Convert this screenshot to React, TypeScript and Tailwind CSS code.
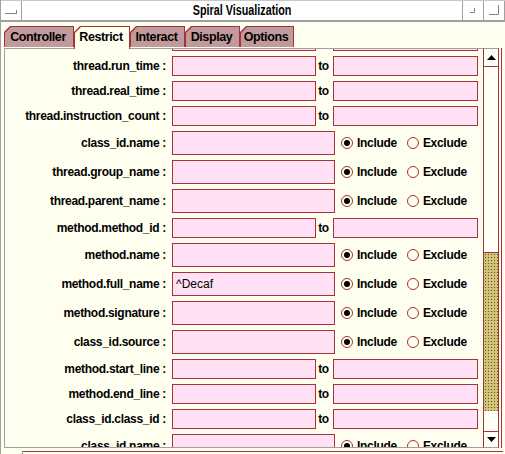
import React from "react";

type Row = {
  label: string;
  kind: "range" | "match";
  value?: string;
};

// the list is scrolled: the first row only shows the bottom edge of its inputs,
// the last one is cut in half
const ROWS: Row[] = [
  { label: "", kind: "range" },
  { label: "thread.run_time", kind: "range" },
  { label: "thread.real_time", kind: "range" },
  { label: "thread.instruction_count", kind: "range" },
  { label: "class_id.name", kind: "match" },
  { label: "thread.group_name", kind: "match" },
  { label: "thread.parent_name", kind: "match" },
  { label: "method.method_id", kind: "range" },
  { label: "method.name", kind: "match" },
  { label: "method.full_name", kind: "match", value: "^Decaf" },
  { label: "method.signature", kind: "match" },
  { label: "class_id.source", kind: "match" },
  { label: "method.start_line", kind: "range" },
  { label: "method.end_line", kind: "range" },
  { label: "class_id.class_id", kind: "range" },
  { label: "class_id.name", kind: "match" },
];

const TABS = [
  { label: "Controller", w: "w-[70px]" },
  { label: "Restrict", w: "w-[56px]" },
  { label: "Interact", w: "w-[55px]" },
  { label: "Display", w: "w-[55px]" },
  { label: "Options", w: "w-[54px]" },
];

function Tab({ label, w, active }: { label: string; w: string; active?: boolean }) {
  return (
    <div
      className={`${w} shrink-0 bg-[#a5323a] pt-px pl-px pr-px [clip-path:polygon(6px_0,100%_0,100%_100%,0_100%,0_6px)] ${
        active ? "h-[23px]" : "h-[21px]"
      }`}
    >
      <div
        className={`h-full flex items-center justify-center pr-[2px] text-[12.5px] leading-none font-bold tracking-[-0.4px] whitespace-nowrap text-black [clip-path:polygon(6px_0,100%_0,100%_100%,0_100%,0_6px)] ${
          active ? "bg-[#fffff0] pb-[2px]" : "bg-[#c19b9b]"
        }`}
      >
        {label}
      </div>
    </div>
  );
}

function Field({ w, h, value }: { w: string; h: string; value?: string }) {
  return (
    <div
      className={`${w} ${h} shrink-0 border border-[#a5323a] bg-[#ffe0f4] flex items-center pl-[3px] text-[12px] font-normal tracking-normal text-black`}
    >
      {value}
    </div>
  );
}

function Radio({ on, label }: { on?: boolean; label: string }) {
  return (
    <div className="flex items-center gap-[4px]">
      <span className="w-[12px] h-[12px] rounded-full border border-[#a5323a] bg-[#fffff0] flex items-center justify-center">
        {on && <span className="w-[6px] h-[6px] rounded-full bg-black" />}
      </span>
      <span>{label}</span>
    </div>
  );
}

function FilterRow({ row }: { row: Row }) {
  return (
    <div className={`flex items-center shrink-0 ${row.kind === "range" ? "h-[20px]" : "h-[24px]"}`}>
      <div className="w-[162px] shrink-0 text-right pr-px whitespace-nowrap">
        {row.label && `${row.label} :`}
      </div>
      <div className="ml-[5px] flex items-center">
        {row.kind === "range" ? (
          <>
            <Field w="w-[144px]" h="h-[20px]" />
            <span className="w-[17px] text-center pr-[2px]">{row.label && "to"}</span>
            <Field w="w-[145px]" h="h-[20px]" />
          </>
        ) : (
          <>
            <Field w="w-[163px]" h="h-[24px]" value={row.value} />
            <div className="ml-[6px]">
              <Radio on label="Include" />
            </div>
            <div className="ml-[10px]">
              <Radio label="Exclude" />
            </div>
          </>
        )}
      </div>
    </div>
  );
}

function Arrow({ up }: { up?: boolean }) {
  return (
    <svg width="9" height="5" viewBox="0 0 9 5">
      <polygon points={up ? "4.5,0 9,5 0,5" : "0,0 9,0 4.5,5"} fill="#000" />
    </svg>
  );
}

function ScrollBar() {
  return (
    <div className="w-[16px] shrink-0 flex flex-col border-x border-[#a5323a] border-t border-t-[#a0a0a0] border-b border-b-[#a0a0a0] bg-[#fffff8]">
      <div className="h-[18px] shrink-0 flex items-center justify-center border-b border-[#a5323a]">
        <Arrow up />
      </div>
      <div className="h-[185px] shrink-0" />
      <div className="h-[159px] shrink-0 border-t border-[#a5323a] bg-[#cdc676] bg-[image:radial-gradient(#8a3a3a_0.6px,transparent_0.9px)] bg-[length:3px_3px]" />
      <div className="flex-1" />
      <div className="h-[16px] shrink-0 flex items-center justify-center border-t border-[#a5323a]">
        <Arrow />
      </div>
    </div>
  );
}

export default function App() {
  return (
    <div className="w-[505px] h-[454px] overflow-hidden flex flex-col bg-[#fffff0] border-l border-[#a0a0a0] text-black font-['Liberation_Sans',Arial,sans-serif]">
      {/* title bar */}
      <div className="h-[22px] shrink-0 flex bg-white border-t border-[#c8c8c8] border-b-2 border-b-[#a0a0a0]">
        <div className="w-[21px] shrink-0 border-r border-[#a0a0a0] flex items-center justify-center">
          <svg width="12" height="6" viewBox="0 0 12 6">
            <path d="M0 5.5H11.5V2" stroke="#808080" fill="none" />
          </svg>
        </div>
        <div className="flex-1 flex items-center justify-center">
          <span className="inline-block text-[14px] font-bold scale-x-[0.77] whitespace-nowrap">
            Spiral Visualization
          </span>
        </div>
        <div className="w-[21px] shrink-0 border-l border-[#a0a0a0] flex items-center justify-center">
          <svg width="6" height="6" viewBox="0 0 6 6">
            <path d="M0 4.5H4.5V0" stroke="#808080" fill="none" />
          </svg>
        </div>
        <div className="w-[22px] shrink-0 border-l border-r border-[#a0a0a0] flex items-center justify-center">
          <svg width="12" height="11" viewBox="0 0 12 11">
            <path d="M1 9.5H10.5V0" stroke="#808080" fill="none" />
          </svg>
        </div>
      </div>

      {/* tabs */}
      <div className="h-[26px] shrink-0 pt-[4px] pl-[3px] flex relative z-10">
        {TABS.map((t) => (
          <Tab key={t.label} label={t.label} w={t.w} active={t.label === "Restrict"} />
        ))}
      </div>

      {/* panel */}
      <div className="h-[400px] shrink-0 flex pl-[3px]">
        <div className="w-[479px] shrink-0 border-l border-t border-b border-[#a0a0a0] overflow-hidden">
          <div className="-mt-[18px] flex flex-col gap-[5px] text-[12px] font-bold tracking-[-0.3px]">
            {ROWS.map((r, i) => (
              <FilterRow key={i} row={r} />
            ))}
          </div>
        </div>
        <ScrollBar />
        <div className="flex-1 pl-[2px]">
          <div className="w-px h-full bg-[#a5323a]" />
        </div>
      </div>

      {/* bottom frame */}
      <div className="flex-1 flex">
        <div className="w-[21px] shrink-0" />
        <div className="w-[481px] mt-[3px] border-t border-l border-t-[#a5323a] border-l-[#a0a0a0]" />
      </div>
    </div>
  );
}
